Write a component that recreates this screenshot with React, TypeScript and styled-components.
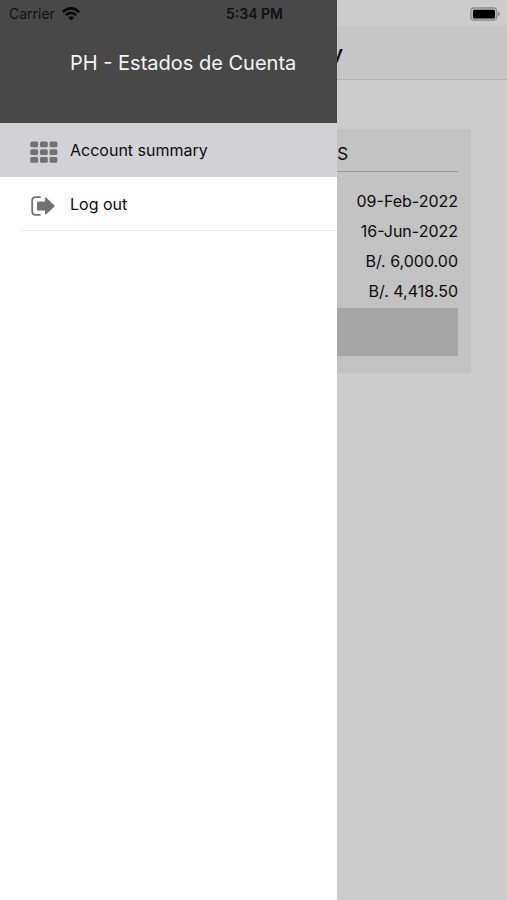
import React from "react";
import styled, { createGlobalStyle } from "styled-components";

const DRAWER_WIDTH = "66.5%";

const GlobalStyle = createGlobalStyle`
  * { box-sizing: border-box; }
  body {
    margin: 0;
    background: #cccccc;
    color: #0c0c0c;
    font-family: Inter, "Liberation Sans", sans-serif;
  }
`;

const Screen = styled.div`
  position: relative;
  min-height: 100vh;
  overflow: hidden;
`;

const StatusBar = styled.header`
  position: absolute;
  inset: 0 0 auto 0;
  z-index: 3;
  display: grid;
  grid-template-columns: 1fr auto 1fr;
  align-items: center;
  height: 27px;
  padding: 0 7px 0 9px;
  font-size: 14px;
  line-height: 16px;
  color: #111111;
`;

const Carrier = styled.span`
  display: flex;
  align-items: center;
  gap: 7px;
`;

const Clock = styled.time`
  font-weight: 600;
`;

const BatterySlot = styled.span`
  display: flex;
  justify-content: flex-end;
`;

const NavBar = styled.div`
  display: flex;
  align-items: center;
  justify-content: center;
  height: 54px;
  margin-top: 26px;
  background: #c6c6c6;
  border-bottom: 1px solid #b4b4b4;
`;

const NavTitle = styled.h1`
  margin: 0;
  font-size: 20px;
  line-height: 28px;
  font-weight: 600;
`;

const Content = styled.main`
  margin-left: ${DRAWER_WIDTH};
  padding: 49px 36px 0 0;
`;

const Card = styled.section`
  padding: 13px 13px 17px 0;
  background: #c2c2c2;
`;

const CardTitle = styled.h2`
  margin: 0;
  padding-bottom: 5px;
  border-bottom: 1px solid #94999b;
  font-size: 17px;
  line-height: 24px;
  font-weight: 400;
`;

const Values = styled.ul`
  margin: 0;
  padding: 14px 0 2px;
  list-style: none;
`;

const Value = styled.li`
  display: flex;
  align-items: center;
  justify-content: flex-end;
  min-height: 30px;
  font-size: 16px;
  line-height: 20px;
  white-space: nowrap;
`;

const CardFooter = styled.div`
  height: 48px;
  background: #a5a5a5;
`;

const Drawer = styled.aside`
  position: absolute;
  inset: 0 auto 0 0;
  z-index: 2;
  width: ${DRAWER_WIDTH};
  background: #ffffff;
`;

const DrawerHeader = styled.div`
  height: 123px;
  padding: 49px 20px 0 70px;
  background: #484848;
  color: #f5f5f5;
  font-size: 20px;
  line-height: 28px;
  white-space: nowrap;
`;

const MenuItem = styled.button<{ $active?: boolean }>`
  display: flex;
  width: 100%;
  height: 54px;
  padding: 0 0 0 20px;
  border: 0;
  background: ${(p) => (p.$active ? "#d2d1d6" : "#ffffff")};
  color: #0c0c0c;
  font: inherit;
  font-size: 16px;
  line-height: 20px;
  text-align: left;
`;

const MenuContent = styled.span<{ $divided?: boolean }>`
  display: flex;
  flex: 1;
  align-items: center;
  gap: 12px;
  height: 100%;
  padding-left: 10px;
  border-bottom: 1px solid ${(p) => (p.$divided ? "#ebebeb" : "transparent")};
`;

const MenuIcon = styled.svg`
  flex: none;
  width: 28px;
  height: 24px;
  margin-top: 4px;
  fill: #717171;
`;

function GridIcon() {
  return (
    <MenuIcon viewBox="0 0 28 24" aria-hidden="true">
      {[1.5, 9.3, 17].map((y) =>
        [0.3, 10, 19.6].map((x) => (
          <rect key={`${x}-${y}`} x={x} y={y} width="7.8" height="5.8" rx="1.6" />
        )),
      )}
    </MenuIcon>
  );
}

function LogoutIcon() {
  return (
    <MenuIcon viewBox="0 0 28 24" aria-hidden="true">
      <path
        d="M10 3.2H5.5Q2.2 3.2 2.2 6.5V17.5Q2.2 20.8 5.5 20.8H10"
        fill="none"
        stroke="#717171"
        strokeWidth="1.8"
        strokeLinecap="round"
      />
      <path d="M8 7.5H15V4.2Q15 2.7 16.2 3.8L24.3 11.3Q25 12 24.3 12.7L16.2 20.2Q15 21.3 15 19.8V16.5H8Q7 16.5 7 15.5V8.5Q7 7.5 8 7.5Z" />
    </MenuIcon>
  );
}

function WifiIcon() {
  return (
    <svg width="18" height="14" viewBox="0 0 18 14" aria-hidden="true">
      <g fill="none" stroke="#080808" strokeWidth="2.5">
        <path d="M0.9 5.1Q9 -2.3 17.1 5.1" />
        <path d="M3.9 8.2Q9 3.5 14.1 8.2" />
      </g>
      <path d="M6 10.5Q9 8 12 10.5L9 13.6Z" fill="#080808" />
    </svg>
  );
}

function BatteryIcon() {
  return (
    <svg width="30" height="14" viewBox="0 0 30 14" aria-hidden="true">
      <rect x="0.8" y="0.8" width="26" height="12.4" rx="3.5" fill="#b9b9b9" stroke="#8a8a8a" strokeWidth="1.2" />
      <rect x="3" y="2.8" width="22" height="8.6" rx="1.5" fill="#000000" />
      <path d="M28 4.8Q30 5.5 30 7Q30 8.5 28 9.2Z" fill="#8a8a8a" />
    </svg>
  );
}

const values = ["09-Feb-2022", "16-Jun-2022", "B/. 6,000.00", "B/. 4,418.50"];

export default function App() {
  return (
    <Screen>
      <GlobalStyle />
      <StatusBar>
        <Carrier>
          Carrier
          <WifiIcon />
        </Carrier>
        <Clock>5:34 PM</Clock>
        <BatterySlot>
          <BatteryIcon />
        </BatterySlot>
      </StatusBar>
      <Drawer>
        <DrawerHeader>PH - Estados de Cuenta</DrawerHeader>
        <nav>
          <MenuItem type="button" $active>
            <MenuContent>
              <GridIcon />
              Account summary
            </MenuContent>
          </MenuItem>
          <MenuItem type="button">
            <MenuContent $divided>
              <LogoutIcon />
              Log out
            </MenuContent>
          </MenuItem>
        </nav>
      </Drawer>
      <NavBar>
        <NavTitle>Account Summary</NavTitle>
      </NavBar>
      <Content>
        <Card>
          <CardTitle>S</CardTitle>
          <Values>
            {values.map((value) => (
              <Value key={value}>{value}</Value>
            ))}
          </Values>
          <CardFooter />
        </Card>
      </Content>
    </Screen>
  );
}
